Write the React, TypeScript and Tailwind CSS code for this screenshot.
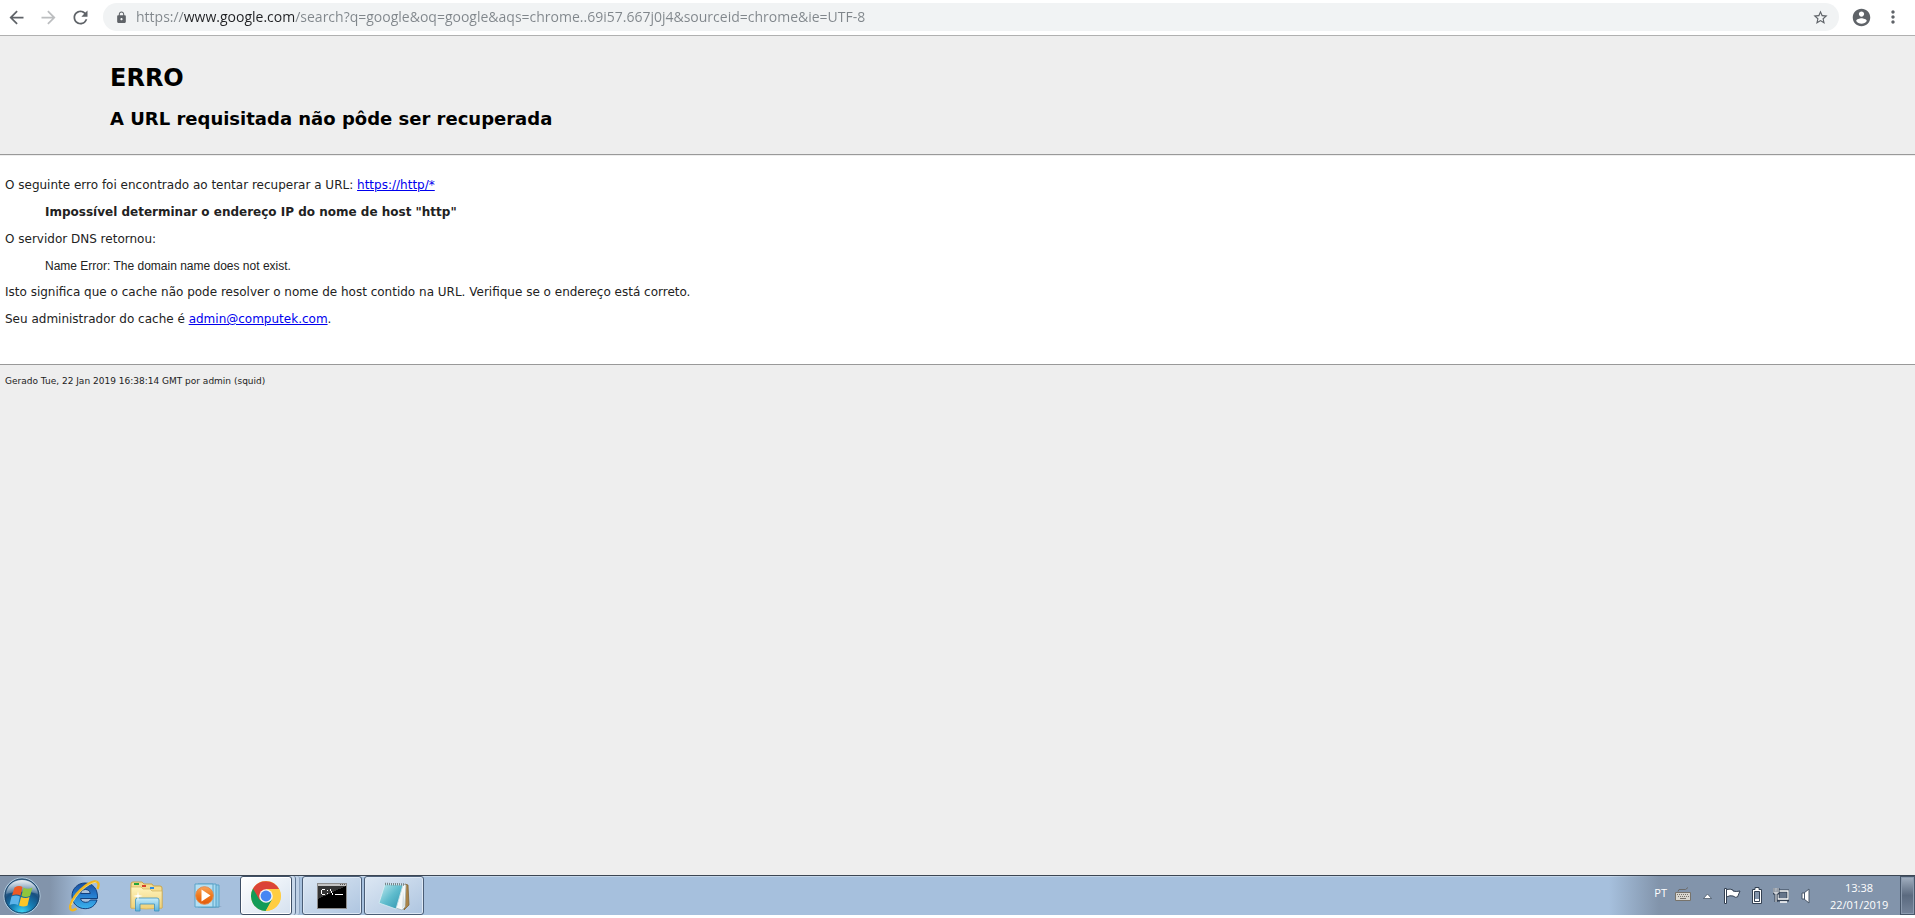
import React, { useState } from "react";
import { MdArrowBack, MdArrowForward, MdLock, MdMoreVert, MdRefresh, MdStarBorder } from "react-icons/md";

const pageFont = "font-['DejaVu_Sans',Verdana,sans-serif]";
const systemFont = "font-['Open_Sans','Noto_Sans',sans-serif]";

function BrowserBar() {
  const [url, setUrl] = useState(
    "https://www.google.com/search?q=google&oq=google&aqs=chrome..69i57.667j0j4&sourceid=chrome&ie=UTF-8"
  );

  return (
    <div className="flex h-9 items-center border-b border-[#b0b0b0] bg-white pr-1.5 pb-px text-[#5f6368]">
      <button aria-label="Voltar" className="flex w-8 justify-center">
        <MdArrowBack size={21} />
      </button>
      <button aria-label="Avançar" className="flex w-8 justify-center text-[#bcbec0]">
        <MdArrowForward size={21} />
      </button>
      <button aria-label="Recarregar" className="flex w-8 justify-center">
        <MdRefresh size={21} />
      </button>
      <div className="ml-[7px] flex h-7 flex-1 items-center rounded-full bg-[#f1f3f4] pr-2.5 pl-3">
        <MdLock size={13} />
        {/* the host is darker than the rest of the address */}
        <input
          aria-label="Barra de endereço"
          value={url}
          onChange={(e) => setUrl(e.target.value)}
          className={`${systemFont} ml-2 h-5 flex-1 bg-[linear-gradient(to_right,#80868b_48px,#202124_48px,#202124_159px,#80868b_159px)] bg-clip-text text-[14px] leading-5 text-transparent outline-none`}
        />
        <button aria-label="Favoritos">
          <MdStarBorder size={17} />
        </button>
      </div>
      <button aria-label="Perfil" className="ml-1.5 flex w-8 justify-center">
        <svg width="21" height="21" viewBox="0 0 24 24" fill="currentColor">
          <path d="M12 2C6.480 2 2 6.480 2 12s4.480 10 10 10 10-4.480 10-10S17.520 2 12 2zm0 3c1.660 0 3 1.340 3 3s-1.340 3-3 3-3-1.340-3-3 1.340-3 3-3zm0 14.200c-2.500 0-4.710-1.280-6-3.220.030-1.990 4-3.080 6-3.080 1.990 0 5.970 1.090 6 3.080-1.290 1.940-3.500 3.220-6 3.220z" />
        </svg>
      </button>
      <button aria-label="Menu" className="flex w-8 justify-center">
        <MdMoreVert size={20} />
      </button>
    </div>
  );
}

function ErrorPage() {
  return (
    <main className={`${pageFont} flex-1 bg-[#eeeeee] text-[12px] leading-[15px] text-[#222222]`}>
      <header className="border-b border-[#999999] pt-7 pr-5 pb-[25px] pl-[110px] text-black">
        <h1 className="text-[24px] leading-7 font-bold">ERRO</h1>
        <h2 className="mt-4 text-[18px] leading-[21px] font-bold">
          A URL requisitada não pôde ser recuperada
        </h2>
      </header>
      <div className="mt-px flex flex-col gap-3 border-b border-[#999999] bg-white px-[5px] pt-[22px] pb-[37px]">
        <p>
          O seguinte erro foi encontrado ao tentar recuperar a URL:{" "}
          <a href="https://http/*" className="text-[#0000ee] underline">https://http/*</a>
        </p>
        <blockquote className="mx-10 font-bold">
          Impossível determinar o endereço IP do nome de host "http"
        </blockquote>
        <p>O servidor DNS retornou:</p>
        <blockquote className="mx-10 font-['Liberation_Sans',Arial,sans-serif] leading-[14px]">
          Name Error: The domain name does not exist.
        </blockquote>
        <p>
          Isto significa que o cache não pode resolver o nome de host contido na URL. Verifique se o
          endereço está correto.
        </p>
        <p>
          Seu administrador do cache é{" "}
          <a href="mailto:admin@computek.com" className="text-[#0000ee] underline">admin@computek.com</a>.
        </p>
      </div>
      <footer className="px-[5px] pt-2.5 text-[9px] leading-3">
        Gerado Tue, 22 Jan 2019 16:38:14 GMT por admin (squid)
      </footer>
    </main>
  );
}

function StartOrb() {
  return (
    <svg width="38" height="38" viewBox="0 0 38 38">
      <defs>
        <radialGradient id="orb" cx="50%" cy="95%" r="85%">
          <stop offset="0" stopColor="#3fd6f5" />
          <stop offset="0.35" stopColor="#1681b8" />
          <stop offset="0.7" stopColor="#174f80" />
          <stop offset="1" stopColor="#5f86a8" />
        </radialGradient>
        <linearGradient id="orbShine" x1="0" y1="0" x2="0" y2="1">
          <stop offset="0" stopColor="#fff" stopOpacity="0.85" />
          <stop offset="1" stopColor="#fff" stopOpacity="0.15" />
        </linearGradient>
      </defs>
      <circle cx="19" cy="19" r="18" fill="url(#orb)" stroke="#b9d3e6" />
      <circle cx="19" cy="19" r="17" fill="none" stroke="#1d4468" />
      <path d="M3 17C4 8 11 3 19 3s15 5 16 14c-9-3-21-3-32 0z" fill="url(#orbShine)" />
      <path d="M11.500 10.500q4.500-2.500 8-.5l-2 8.500q-4-2-8.500 0z" fill="#ee5a25" />
      <path d="M20.500 10.500q4 2.500 9 0l-2.500 8.500q-4.500 2-8.500 0z" fill="#8fc63d" />
      <path d="M8.500 19.500q4.500-2 8.500 0l-2 8.500q-4-2-8.500 0z" fill="#5db4ea" />
      <path d="M18 20q4.500 2 8.500 0l-2 8.500q-4 2-8.500 0z" fill="#fcc628" />
    </svg>
  );
}

function ExplorerIcon() {
  return (
    <svg width="32" height="32" viewBox="0 0 32 32">
      <defs>
        <linearGradient id="ie" x1="0" y1="0" x2="0" y2="1">
          <stop offset="0" stopColor="#1c4f9c" />
          <stop offset="0.45" stopColor="#2479cc" />
          <stop offset="1" stopColor="#3cb4ee" />
        </linearGradient>
      </defs>
      <path
        fillRule="evenodd"
        d="M17 3C25 3 30 9 29.500 18.500H12.500c.5 2.500 2.500 3.800 5.200 3.800 2.300 0 3.800-.8 4.600-2.300h6.700c-1.500 5.500-6 8.700-11.800 8.700C9.500 28.700 4 23 4 16S9.500 3 17 3zM12.500 13.500h9.800c-.5-2.800-2.400-4-4.800-4s-4.300 1.200-5 4z"
        fill="url(#ie)"
        stroke="#123f7c"
      />
      <path
        d="M29.500 9c2-5 1-8-3-7.500C18.500 3 6 14 2.500 25c-1.500 5.500 2 6.500 6 3.500"
        fill="none"
        stroke="#f2b61d"
        strokeWidth="2.400"
      />
      <path d="M28.500 2C20 3 7 15 3.500 25" fill="none" stroke="#ffe98a" strokeWidth="0.800" />
    </svg>
  );
}

function FolderIcon() {
  return (
    <svg width="34" height="32" viewBox="0 0 34 32">
      <defs>
        <linearGradient id="folder" x1="0" y1="0" x2="0" y2="1">
          <stop offset="0" stopColor="#fff4bd" />
          <stop offset="1" stopColor="#efd077" />
        </linearGradient>
        <linearGradient id="stand" x1="0" y1="0" x2="0" y2="1">
          <stop offset="0" stopColor="#c8eefb" />
          <stop offset="1" stopColor="#5fb4dc" />
        </linearGradient>
      </defs>
      <path d="M2 28V4q0-2 2-2h9l2 2h8l1.500 2H31q2 0 2 2v20z" fill="#f3dc90" stroke="#c9a54b" />
      <path d="M5 3h5v2H5z" fill="#24a43c" />
      <path d="M13 5h4v2h-4z" fill="#d8402b" />
      <path d="M21 7h4v2h-4z" fill="#2b8ce6" />
      <path d="M2 28V7h10l2 2h7l2 2h10v17q-16 2-31 0z" fill="url(#folder)" stroke="#d2b15c" strokeWidth="0.700" />
      <path d="M6.500 31V20q0-2 2-2H28q2 0 2 2v11h-4.500v-7H11v7z" fill="url(#stand)" stroke="#3e91bd" strokeWidth="0.800" />
      <path d="M9 11l.7 4 4.300 1-4.300 1L9 21l-.7-4L4 16l4.300-1z" fill="#fff" />
    </svg>
  );
}

function MediaPlayerIcon() {
  return (
    <svg width="30" height="30" viewBox="0 0 30 30">
      <defs>
        <linearGradient id="play" x1="0" y1="0" x2="0" y2="1">
          <stop offset="0" stopColor="#f9a35c" />
          <stop offset="0.5" stopColor="#f07a1c" />
          <stop offset="1" stopColor="#e2590c" />
        </linearGradient>
      </defs>
      <path d="M22 25h7l-4 2H8z" fill="#7f98b5" opacity="0.600" />
      <path d="M8 4h18v22H8z" fill="#8fcbe8" stroke="#5ba3c8" />
      <path d="M5 3h18v23H5z" fill="#a8daf0" stroke="#5ba3c8" />
      <path d="M2 3h18v23H2z" fill="#b5dff2" stroke="#5ba3c8" />
      <circle cx="11.500" cy="14.500" r="8.800" fill="url(#play)" stroke="#e68a4a" />
      <path d="M8.500 8.500v12l9-6z" fill="#fff" />
    </svg>
  );
}

function ChromeIcon() {
  return (
    <svg width="30" height="30" viewBox="0 0 30 30">
      <circle cx="15" cy="15" r="15" fill="#ffcd41" />
      <path d="M15 15L2 7.500A15 15 0 0 0 14.700 30L21.500 18.500z" fill="#139b57" />
      <path d="M15 15L8.500 18.700 2 7.500A15 15 0 0 1 28 8H15z" fill="#db4437" />
      <path d="M15 8h13a15 15 0 0 1-13.300 22L21 18.500z" fill="#ffcd41" />
      <circle cx="15" cy="15" r="6.800" fill="#f4f4f4" />
      <circle cx="15" cy="15" r="5.400" fill="#4587f3" />
    </svg>
  );
}

function TerminalIcon() {
  return (
    <svg width="30" height="26" viewBox="0 0 30 26" shapeRendering="crispEdges">
      <path d="M0 0h30v26H0z" fill="#8c8c8c" />
      <path d="M1 3h28v22H1z" fill="#000" />
      <path d="M1 1h28v2H1z" fill="#c4c4c4" />
      <path d="M23 1.500h1M25 1.500h1M27 1.500h1" stroke="#555" />
      <path d="M1 3h28L1 16z" fill="#343434" />
      <path
        d="M5 6.500h3M4.500 7v4M5 11.500h3M10.500 7v1M10.500 10v1M13.500 6v2M14.500 8v2M15.500 10v2M18 11.500h8"
        fill="none"
        stroke="#fff"
      />
    </svg>
  );
}

function NotepadIcon() {
  return (
    <svg width="32" height="30" viewBox="0 0 32 30">
      <defs>
        <linearGradient id="note" x1="0" y1="0" x2="1" y2="1">
          <stop offset="0" stopColor="#c4ebf0" />
          <stop offset="0.5" stopColor="#5fbccd" />
          <stop offset="1" stopColor="#2d92ad" />
        </linearGradient>
      </defs>
      <path d="M27 3l3 1 1 20-5 5z" fill="#a98347" stroke="#7a5b2b" strokeWidth="0.700" />
      <path d="M25 3l3 1-1 22-3 3-6-2z" fill="#f6f8f8" stroke="#9eb0b5" strokeWidth="0.700" />
      <path d="M25 10l2 14-3 4z" fill="#d5dfe2" />
      <path d="M7 3l18 1-7 24L1 22z" fill="url(#note)" stroke="#d9eef2" strokeWidth="0.800" />
      <path d="M7 3l20 .5" stroke="#77858a" strokeWidth="2.500" strokeDasharray="1 1" />
    </svg>
  );
}

const pinned = [
  { name: "Internet Explorer", icon: <ExplorerIcon /> },
  { name: "Windows Explorer", icon: <FolderIcon /> },
  { name: "Windows Media Player", icon: <MediaPlayerIcon /> },
];

const running = [
  { name: "Prompt de comando", icon: <TerminalIcon /> },
  { name: "Bloco de notas", icon: <NotepadIcon /> },
];

function Tray() {
  return (
    <div className={`${systemFont} flex h-full items-center bg-linear-to-r from-transparent to-[#8294ab] to-[50px] pl-[45px] text-[11px] text-white`}>
      <button className="mr-2 -mt-1">PT</button>
      <button aria-label="Teclado" className="-mt-1 mr-3">
        <svg width="16" height="14" viewBox="0 0 16 14">
          <path d="M3 4.500q0-3 4-2t6-2" fill="none" stroke="#6b6b6b" />
          <path d="M.5 5.500h15v8H.5z" fill="#d9d6cf" stroke="#77736b" />
          <path d="M2 7.500h12M3 9.500h11" stroke="#77736b" strokeDasharray="1 1" />
          <path d="M5 11.500h6" stroke="#77736b" />
        </svg>
      </button>
      <button aria-label="Mostrar ícones ocultos" className="mr-3">
        <svg width="9" height="6" viewBox="0 0 9 6">
          <path d="M.5 5.500L4.500 1l4 4.500z" fill="#fff" stroke="#3c4a5c" strokeWidth="0.700" />
        </svg>
      </button>
      <button aria-label="Central de Ações" className="mr-2.5">
        <svg width="17" height="16" viewBox="0 0 17 16">
          <path d="M.5.5h2v15h-2z" fill="#fff" stroke="#334052" />
          <path d="M2.500 1.500q4-1 6.500.5v1q3 1 7 0l-2.500 6q-2 1-4.500-1-3-1-6.500 1z" fill="#fff" stroke="#334052" />
        </svg>
      </button>
      <button aria-label="Energia" className="mr-2.5">
        <svg width="12" height="17" viewBox="0 0 12 17">
          <path d="M4 .5h4v2h2.500v14h-9v-14H4z" fill="#fff" stroke="#334052" />
          <path d="M3.500 4.500h5v10h-5z" fill="#8294ab" stroke="#334052" />
          <path d="M4 12h4v2H4z" fill="#fff" />
        </svg>
      </button>
      <button aria-label="Rede" className="mr-3">
        <svg width="16" height="17" viewBox="0 0 16 17">
          <path d="M5 4h10v9H5z" fill="#66758a" stroke="#334052" strokeWidth="3" />
          <path d="M5 4h10v8H5z" fill="none" stroke="#fff" strokeWidth="1.300" />
          <path d="M7 15h7" stroke="#fff" strokeWidth="1.500" />
          <path d="M1 1v5h4V1M3 6v9" fill="none" stroke="#334052" strokeWidth="3" />
          <path d="M1 1v5h4V1M3 1v14" fill="none" stroke="#fff" />
        </svg>
      </button>
      <button aria-label="Volume" className="mr-5">
        <svg width="9" height="16" viewBox="0 0 9 16">
          <path d="M1 5h2l5-4v14l-5-4H1z" fill="#fff" stroke="#4a586b" />
          <path d="M3.500 5v6" stroke="#4a586b" />
        </svg>
      </button>
      <button className="mr-3 w-[58px] text-center leading-[17px] whitespace-nowrap">
        13:38
        <br />
        22/01/2019
      </button>
      <button
        aria-label="Mostrar área de trabalho"
        className="h-full w-[15px] border border-[#47566a] bg-linear-to-b from-[#a3b0c1] via-[#5b6a7f] via-50% to-[#75849a] shadow-[inset_0_0_0_1px_#8b9aae]"
      />
    </div>
  );
}

function Taskbar() {
  return (
    <nav className="flex h-10 items-center border-t border-[#3c4653] bg-[#a6c0dd] shadow-[inset_0_1px_0_#c3d5e8]">
      <div className="flex h-full flex-1 items-center bg-linear-to-r from-[#8294ab] from-[50px] to-transparent to-[85px]">
        <button aria-label="Iniciar" className="flex w-[54px] pl-[3px]">
          <StartOrb />
        </button>
        <div className="flex h-full items-center gap-0.5">
          {pinned.map((app) => (
            <button key={app.name} aria-label={app.name} className="flex w-[60px] justify-center">
              {app.icon}
            </button>
          ))}
          {/* stacked edges: more than one window is open */}
          <button
            aria-label="Google Chrome"
            className="flex h-full w-[60px] rounded-[3px] border-r border-[#8fa6c2] bg-[#bfd1e6]"
          >
            <span className="flex h-full w-14 rounded-[3px] border-r border-[#5d7390] bg-[#c8d8ea]">
              <span className="flex h-full w-[52px] items-center justify-center rounded-[3px] border border-[#3f5067] bg-linear-to-br from-white to-[#d5e1ef] shadow-[inset_0_0_0_1px_#ffffff]">
                <ChromeIcon />
              </span>
            </span>
          </button>
          {running.map((app) => (
            <button
              key={app.name}
              aria-label={app.name}
              className="flex h-full w-[60px] items-center justify-center rounded-[3px] border border-[#4a5d76] bg-linear-to-br from-[#dce7f3] to-[#aec5e0] shadow-[inset_0_0_0_1px_#dde8f4]"
            >
              {app.icon}
            </button>
          ))}
        </div>
      </div>
      <Tray />
    </nav>
  );
}

export default function App() {
  return (
    <div className="flex min-h-screen flex-col bg-white pb-[3px]">
      <BrowserBar />
      <ErrorPage />
      <Taskbar />
    </div>
  );
}
